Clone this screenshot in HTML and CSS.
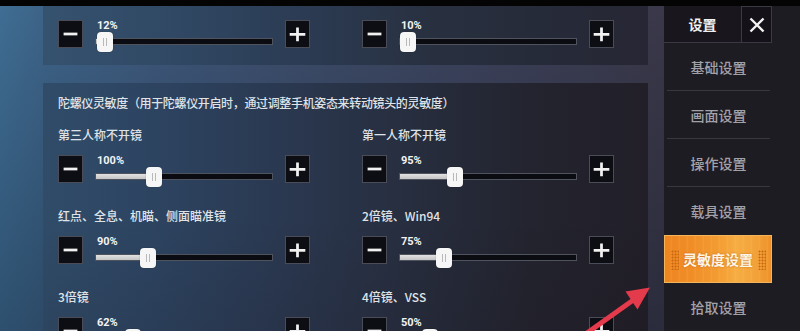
FILE: index.html
```html
<!DOCTYPE html>
<html lang="zh-CN">
<head>
<meta charset="utf-8">
<title>设置 - 灵敏度设置</title>
<link rel="stylesheet" href="styles.css">
</head>
<body>
<div class="screen">
  <div class="topband"></div>
  <div class="body-row">
    <main class="stage">
      <section class="panel panel-top">
        <div class="grid">
          <div class="control">
            <button class="btn"><svg viewBox="0 0 25 28"><path d="M5 14H20"/></svg></button>
            <div class="slider">
              <div class="value">12%</div>
              <div class="track" style="--p:0.0069"><div class="fill"></div><div class="thumb"></div></div>
            </div>
            <button class="btn"><svg viewBox="0 0 25 28"><path d="M4 14.5H21M12.5 7V22"/></svg></button>
          </div>
          <div class="control">
            <button class="btn"><svg viewBox="0 0 25 28"><path d="M5 14H20"/></svg></button>
            <div class="slider">
              <div class="value">10%</div>
              <div class="track" style="--p:0"><div class="fill"></div><div class="thumb"></div></div>
            </div>
            <button class="btn"><svg viewBox="0 0 25 28"><path d="M4 14.5H21M12.5 7V22"/></svg></button>
          </div>
        </div>
      </section>

      <section class="panel panel-gyro">
        <h2 class="title">陀螺仪灵敏度（用于陀螺仪开启时，通过调整手机姿态来转动镜头的灵敏度）</h2>
        <div class="grid">
          <div class="item">
            <div class="label">第三人称不开镜</div>
            <div class="control">
              <button class="btn"><svg viewBox="0 0 25 28"><path d="M5 14H20"/></svg></button>
              <div class="slider">
                <div class="value">100%</div>
                <div class="track" style="--p:0.3103"><div class="fill"></div><div class="thumb"></div></div>
              </div>
              <button class="btn"><svg viewBox="0 0 25 28"><path d="M4 14.5H21M12.5 7V22"/></svg></button>
            </div>
          </div>
          <div class="item">
            <div class="label">第一人称不开镜</div>
            <div class="control">
              <button class="btn"><svg viewBox="0 0 25 28"><path d="M5 14H20"/></svg></button>
              <div class="slider">
                <div class="value">95%</div>
                <div class="track" style="--p:0.2931"><div class="fill"></div><div class="thumb"></div></div>
              </div>
              <button class="btn"><svg viewBox="0 0 25 28"><path d="M4 14.5H21M12.5 7V22"/></svg></button>
            </div>
          </div>
          <div class="item">
            <div class="label">红点、全息、机瞄、侧面瞄准镜</div>
            <div class="control">
              <button class="btn"><svg viewBox="0 0 25 28"><path d="M5 14H20"/></svg></button>
              <div class="slider">
                <div class="value">90%</div>
                <div class="track" style="--p:0.2759"><div class="fill"></div><div class="thumb"></div></div>
              </div>
              <button class="btn"><svg viewBox="0 0 25 28"><path d="M4 14.5H21M12.5 7V22"/></svg></button>
            </div>
          </div>
          <div class="item">
            <div class="label">2倍镜、Win94</div>
            <div class="control">
              <button class="btn"><svg viewBox="0 0 25 28"><path d="M5 14H20"/></svg></button>
              <div class="slider">
                <div class="value">75%</div>
                <div class="track" style="--p:0.2241"><div class="fill"></div><div class="thumb"></div></div>
              </div>
              <button class="btn"><svg viewBox="0 0 25 28"><path d="M4 14.5H21M12.5 7V22"/></svg></button>
            </div>
          </div>
          <div class="item">
            <div class="label">3倍镜</div>
            <div class="control">
              <button class="btn"><svg viewBox="0 0 25 28"><path d="M5 14H20"/></svg></button>
              <div class="slider">
                <div class="value">62%</div>
                <div class="track" style="--p:0.1793"><div class="fill"></div><div class="thumb"></div></div>
              </div>
              <button class="btn"><svg viewBox="0 0 25 28"><path d="M4 14.5H21M12.5 7V22"/></svg></button>
            </div>
          </div>
          <div class="item">
            <div class="label">4倍镜、VSS</div>
            <div class="control">
              <button class="btn"><svg viewBox="0 0 25 28"><path d="M5 14H20"/></svg></button>
              <div class="slider">
                <div class="value">50%</div>
                <div class="track" style="--p:0.1379"><div class="fill"></div><div class="thumb"></div></div>
              </div>
              <button class="btn"><svg viewBox="0 0 25 28"><path d="M4 14.5H21M12.5 7V22"/></svg></button>
            </div>
          </div>
        </div>
      </section>
    </main>

    <aside class="sidebar">
      <div class="side-head">
        <div class="side-title">设置</div>
        <button class="close"><svg viewBox="0 0 16 16"><path d="M1.5 1.5L14.5 14.5M14.5 1.5L1.5 14.5"/></svg></button>
      </div>
      <ul class="menu">
        <li>基础设置</li>
        <li>画面设置</li>
        <li>操作设置</li>
        <li class="plain">载具设置</li>
        <li class="active">灵敏度设置</li>
        <li class="plain">拾取设置</li>
      </ul>
    </aside>
  </div>

  <svg class="arrow" viewBox="0 0 800 331">
    <path class="arrow-shaft" d="M580 338L634 299.5"/>
    <path class="arrow-head" d="M650 287.5L625.5 291.5L637.5 309.5Z"/>
  </svg>
</div>
</body>
</html>
```

FILE: styles.css
```css
* { box-sizing: border-box; margin: 0; padding: 0; }

html, body {
  width: 800px;
  height: 331px;
  overflow: hidden;
  background: #000;
}

body {
  font-family: "Noto Sans CJK SC", "Noto Sans", sans-serif;
  color: #dde1e7;
}

.screen {
  position: relative;
  width: 800px;
  height: 331px;
  display: flex;
  flex-direction: column;
}

.topband {
  flex: none;
  height: 6px;
  background: #040405;
}

.body-row {
  flex: 1;
  min-height: 0;
  display: flex;
}

/* ---------- left content ---------- */
.stage {
  flex: none;
  width: 664px;
  padding: 0 16px 0 43px;
  display: flex;
  flex-direction: column;
  gap: 18px;
  overflow: hidden;
  background:
    linear-gradient(180deg, rgba(0, 0, 0, 0) 0%, rgba(6, 14, 28, 0.3) 100%),
    linear-gradient(90deg, #3f6d93 0%, #3d6387 7%, #3d5678 25%, #3c4a66 50%, #3b4058 75%, #3a3849 100%);
}

.panel {
  flex: none;
  padding-left: 15px;
}

.panel-top {
  height: 59px;
  padding-top: 14px;
  background: linear-gradient(90deg, #35526f 0%, #304864 22%, #2b3a51 45%, #28303f 65%, #262a38 85%, #272634 100%);
}

.panel-gyro {
  flex: 1;
  padding-top: 11px;
  background:
    linear-gradient(180deg, rgba(0, 0, 0, 0) 50%, rgba(20, 8, 14, 0.12) 100%),
    linear-gradient(90deg, #304c69 0%, #2d4461 18%, #2a3850 40%, #272e3f 60%, #23242f 80%, #221f28 100%);
}

.title {
  font-size: 12px;
  font-weight: 500;
  line-height: 18px;
  letter-spacing: -0.35px;
  margin-bottom: 14px;
  color: #dfe3e8;
  white-space: nowrap;
}

.grid {
  display: grid;
  grid-template-columns: 252px 252px;
  column-gap: 52px;
  row-gap: 24px;
}

.label {
  font-size: 12px;
  font-weight: 500;
  line-height: 18px;
  margin-bottom: 11px;
  color: #dfe3e8;
  white-space: nowrap;
}

.control {
  display: flex;
  align-items: flex-start;
  gap: 12px;
  height: 28px;
}

.btn {
  flex: none;
  display: block;
  width: 25px;
  height: 28px;
  border: 1px solid #4a4d58;
  background: #0d0e13;
  padding: 0;
}

.btn svg {
  display: block;
  width: 23px;
  height: 26px;
  margin: 0;
}

.btn path {
  stroke: #f1f1f1;
  stroke-width: 3;
  fill: none;
}

.slider {
  flex: none;
  width: 178px;
}

.value {
  font-family: Roboto, "Liberation Sans", sans-serif;
  font-weight: 700;
  font-size: 11px;
  line-height: 12px;
  color: #f3f3f3;
  padding-left: 2px;
}

.track {
  position: relative;
  margin-top: 6px;
  height: 7px;
  border: 1px solid #4f535e;
  background: #0a0c12;
}

.fill {
  height: 100%;
  width: calc((100% - 16px) * var(--p) + 8px);
  background: linear-gradient(180deg, #e2e2e2 0%, #c4c4c4 100%);
}

.thumb {
  position: absolute;
  top: -7px;
  left: calc((100% - 16px) * var(--p));
  width: 16px;
  height: 20px;
  border-radius: 4px;
  background-color: #f6f6f6;
  background-image: linear-gradient(90deg, transparent 6px, #b9b9b9 6px, #b9b9b9 7px, transparent 7px, transparent 9px, #b9b9b9 9px, #b9b9b9 10px, transparent 10px);
  background-size: 100% 8px;
  background-position: center;
  background-repeat: no-repeat;
  box-shadow: 0 0 1px rgba(0, 0, 0, 0.6);
}

/* ---------- sidebar ---------- */
.sidebar {
  flex: 1;
  background: #1e1c23;
}

.side-head {
  display: flex;
  width: 108px;
  height: 37px;
  border-bottom: 1px solid #3a3842;
}

.side-title {
  width: 77px;
  display: flex;
  align-items: center;
  justify-content: center;
  background: #19171d;
  font-size: 14px;
  font-weight: 700;
  color: #f0f0f0;
}

.close {
  width: 31px;
  display: flex;
  align-items: center;
  justify-content: center;
  border: 1px solid #3c3a44;
  border-bottom: none;
  background: #141218;
  padding: 0;
}

.close svg {
  width: 16px;
  height: 16px;
}

.close path {
  stroke: #f2f2f2;
  stroke-width: 2.4;
  fill: none;
}

.menu {
  list-style: none;
  width: 108px;
}

.menu li {
  height: 48px;
  margin: 0 2px 0 3px;
  display: flex;
  align-items: center;
  justify-content: center;
  font-size: 14px;
  font-weight: 500;
  color: #a3a1a8;
  border-bottom: 1px solid #38363f;
}

.menu li.plain {
  border-bottom: none;
}

.menu li.active {
  position: relative;
  margin: 0;
  border: 1px solid #f4b45a;
  color: #fff5e4;
  font-weight: 700;
  text-shadow: 0 0 2px rgba(160, 70, 0, 0.6);
  background:
    repeating-linear-gradient(90deg, rgba(255, 255, 255, 0) 0px, rgba(255, 255, 255, 0) 5px, rgba(255, 230, 160, 0.10) 6px, rgba(255, 255, 255, 0) 8px),
    linear-gradient(90deg, #ee8520 0%, #f08d26 25%, #f39c32 50%, #f6ad42 68%, #f3a23a 85%, #ee9129 100%);
}

.menu li.active::before,
.menu li.active::after {
  content: "";
  position: absolute;
  top: 14px;
  width: 8px;
  height: 20px;
  background-image: radial-gradient(circle, #c9690f 0.8px, transparent 1.2px);
  background-size: 3px 3px;
}

.menu li.active::before { left: 6px; }
.menu li.active::after { right: 5px; }

/* ---------- annotation arrow ---------- */
.arrow {
  position: absolute;
  left: 0;
  top: 0;
  width: 800px;
  height: 331px;
  pointer-events: none;
}

.arrow-shaft {
  stroke: #e33a4c;
  stroke-width: 5;
  fill: none;
}

.arrow-head {
  fill: #e33a4c;
}
```
